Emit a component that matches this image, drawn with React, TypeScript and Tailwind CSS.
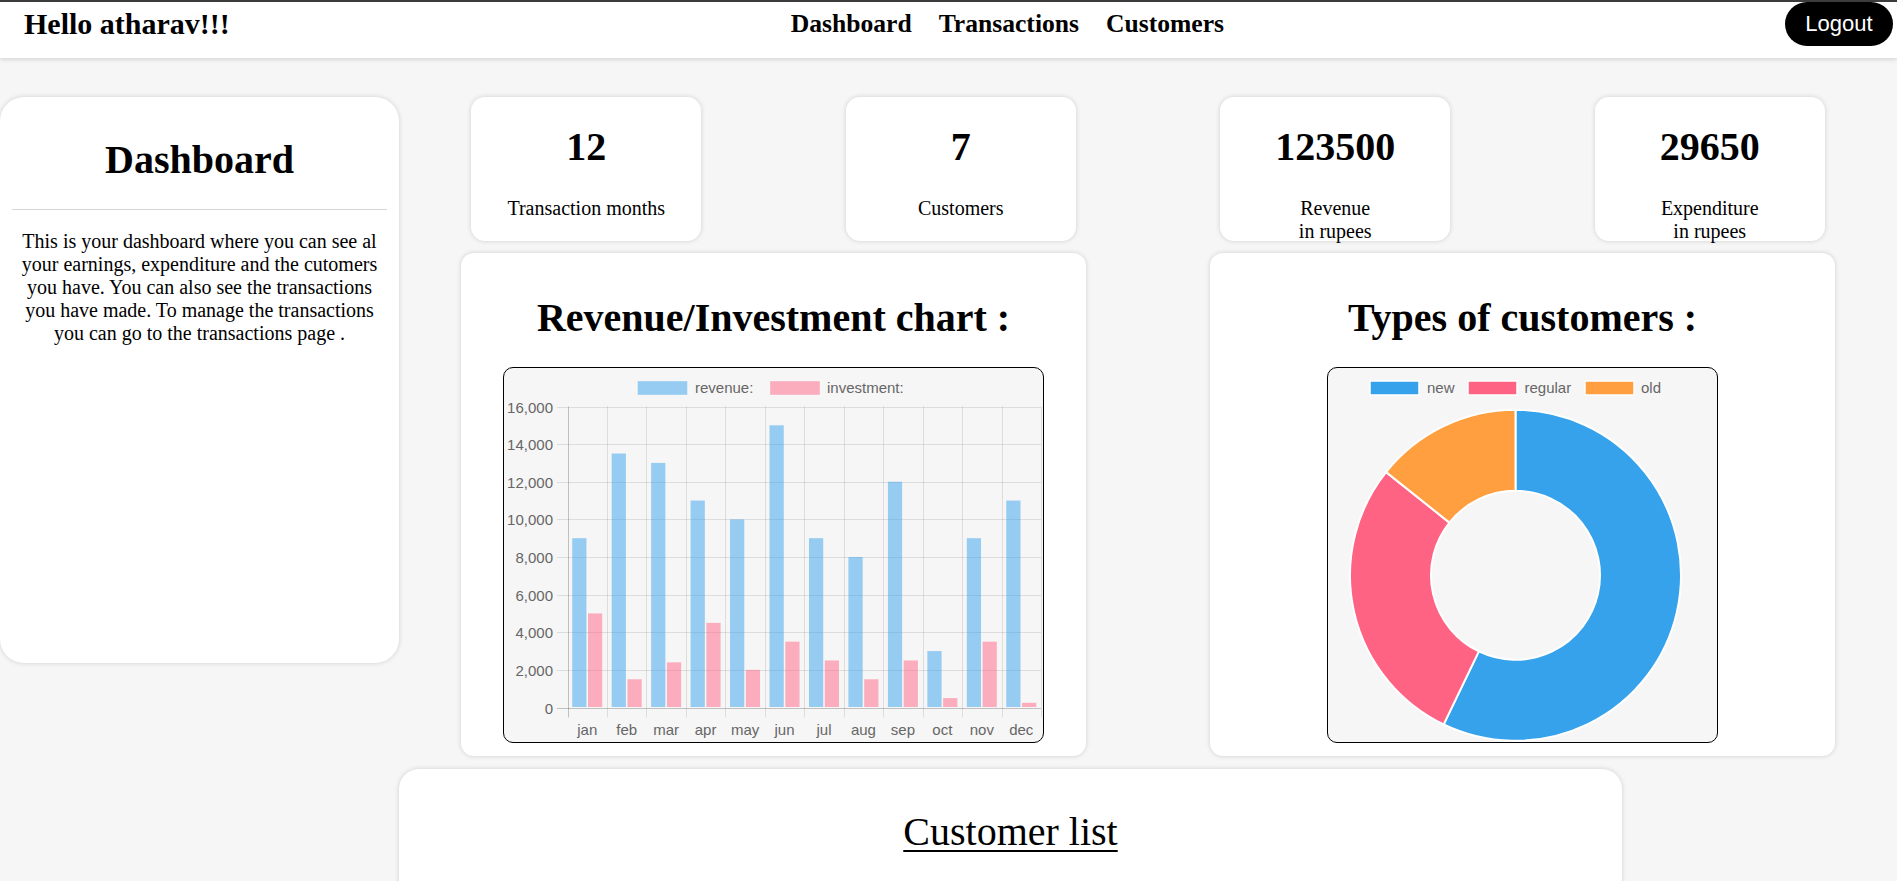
import React from "react";

const revenue = [9000, 13500, 13000, 11000, 10000, 15000, 9000, 8000, 12000, 3000, 9000, 11000];
const investment = [5000, 1500, 2400, 4500, 2000, 3500, 2500, 1500, 2500, 500, 3500, 250];
const months = ["jan", "feb", "mar", "apr", "may", "jun", "jul", "aug", "sep", "oct", "nov", "dec"];

const SANS = "'Liberation Sans', Arial, Helvetica, sans-serif";

function BarChart() {
  const W = 539;
  const H = 374;
  const left = 63.5;
  const right = 537;
  const top = 38.5;
  const zero = 339.5;
  const step = (zero - top) / 8;
  const cat = (right - left) / 12;
  const yFor = (v: number) => zero - (v / 16000) * (zero - top);
  const slot = (cat * 0.8) / 2;
  const bw = slot * 0.9;
  return (
    <svg width={W} height={H} className="block">
      <rect x={133.5} y={13} width={50} height={14} fill="rgba(54,162,235,0.5)" stroke="rgba(255,255,255,0.35)" />
      <text x={191} y={25} fontSize={15} fill="#666" fontFamily={SANS}>
        revenue:
      </text>
      <rect x={266} y={13} width={50} height={14} fill="rgba(255,99,132,0.5)" stroke="rgba(255,255,255,0.35)" />
      <text x={323} y={25} fontSize={15} fill="#666" fontFamily={SANS}>
        investment:
      </text>
      {Array.from({ length: 9 }).map((_, i) => {
        const y = Math.round(top + i * step) + 0.5;
        return (
          <g key={"h" + i}>
            <line x1={53} x2={right} y1={y} y2={y} stroke={i === 8 ? "rgba(0,0,0,0.22)" : "rgba(0,0,0,0.1)"} />
            <text x={49} y={y + 5} fontSize={15} fill="#666" textAnchor="end" fontFamily={SANS}>
              {((8 - i) * 2000).toLocaleString("en-US")}
            </text>
          </g>
        );
      })}
      {Array.from({ length: 13 }).map((_, i) => {
        const x = Math.round(left + i * cat) + 0.5;
        return (
          <line
            key={"v" + i}
            x1={x}
            x2={x}
            y1={top}
            y2={349.5}
            stroke={i === 0 ? "rgba(0,0,0,0.22)" : "rgba(0,0,0,0.1)"}
          />
        );
      })}
      {months.map((m, i) => {
        const cx = left + i * cat;
        const start = cx + cat * 0.1;
        const rx = start + slot * 0.05;
        const ix = start + slot + slot * 0.05;
        const ry = yFor(revenue[i]);
        const iy = yFor(investment[i]);
        return (
          <g key={m}>
            <rect x={rx} y={ry} width={bw} height={zero - 0.5 - ry} fill="rgba(54,162,235,0.5)" />
            <rect x={ix} y={iy} width={bw} height={zero - 0.5 - iy} fill="rgba(255,99,132,0.5)" />
            <text x={cx + cat / 2} y={367} fontSize={15} fill="#666" textAnchor="middle" fontFamily={SANS}>
              {m}
            </text>
          </g>
        );
      })}
    </svg>
  );
}

function Doughnut() {
  const data = [
    { v: 4, c: "#36a2eb", label: "new" },
    { v: 2, c: "#ff6384", label: "regular" },
    { v: 1, c: "#ff9f40", label: "old" },
  ];
  const total = data.reduce((s, d) => s + d.v, 0);
  const cx = 187.5;
  const cy = 207.3;
  const R = 165.5;
  const r = 84.5;
  const pt = (a: number, rad: number) => {
    const t = (a * Math.PI) / 180;
    return [cx + rad * Math.sin(t), cy - rad * Math.cos(t)];
  };
  let acc = 0;
  const paths = data.map((d) => {
    const a0 = acc;
    const a1 = acc + (d.v / total) * 360;
    acc = a1;
    const large = a1 - a0 > 180 ? 1 : 0;
    const [ox0, oy0] = pt(a0, R);
    const [ox1, oy1] = pt(a1, R);
    const [ix1, iy1] = pt(a1, r);
    const [ix0, iy0] = pt(a0, r);
    const dstr = `M ${ox0} ${oy0} A ${R} ${R} 0 ${large} 1 ${ox1} ${oy1} L ${ix1} ${iy1} A ${r} ${r} 0 ${large} 0 ${ix0} ${iy0} Z`;
    return { d: dstr, c: d.c };
  });
  const legend = [
    { x: 42, tx: 99, c: "#36a2eb", t: "new" },
    { x: 140, tx: 196.5, c: "#ff6384", t: "regular" },
    { x: 257, tx: 313, c: "#ff9f40", t: "old" },
  ];
  return (
    <svg width={389} height={374} className="block">
      {legend.map((l) => (
        <g key={l.t}>
          <rect x={l.x} y={13} width={49} height={14} fill={l.c} stroke="#fff" strokeWidth={1.5} />
          <text x={l.tx} y={25} fontSize={15} fill="#666" fontFamily={SANS}>
            {l.t}
          </text>
        </g>
      ))}
      {paths.map((p, i) => (
        <path key={i} d={p.d} fill={p.c} stroke="#fff" strokeWidth={2} strokeLinejoin="round" />
      ))}
    </svg>
  );
}

function StatCard({ value, label }: { value: string; label: React.ReactNode }) {
  return (
    <div className="flex h-[144px] w-[230px] flex-col items-center rounded-[14px] bg-white pt-[27px] shadow-[0_0_5px_rgba(0,0,0,0.16)]">
      <div className="text-[40px] font-bold leading-[46px]">{value}</div>
      <div className="mt-[27px] text-center text-[20px] leading-[23px]">{label}</div>
    </div>
  );
}

function ChartCard({ title, children, boxW }: { title: string; children: React.ReactNode; boxW: string }) {
  return (
    <div className="flex h-[503px] w-[625px] flex-col items-center rounded-[13px] bg-white pt-[42px] shadow-[0_0_5px_rgba(0,0,0,0.16)]">
      <h2 className="text-center text-[40px] font-bold leading-[46px]">{title}</h2>
      <div className={"mt-[26px] h-[376px] overflow-hidden rounded-[10px] border border-black bg-[#f6f6f6] " + boxW}>
        {children}
      </div>
    </div>
  );
}

export default function App() {
  return (
    <div className="min-h-screen overflow-hidden bg-[#f6f6f6] font-['Liberation_Serif','Times_New_Roman',serif] text-black">
      <header className="relative z-10 h-[58px] border-t-2 border-[#3c3c3c] bg-white pl-6 pr-1 shadow-[0_2px_4px_rgba(0,0,0,0.12)]">
        <div className="flex h-[44px] items-center justify-between">
          <div className="text-[30px] font-bold leading-[34px]">Hello atharav!!!</div>
          <nav className="flex gap-[27px] text-[25.6px] font-bold leading-[30px]">
            <a>Dashboard</a>
            <a>Transactions</a>
            <a>Customers</a>
          </nav>
          <button className="h-[44px] w-[108px] rounded-full bg-black font-['Liberation_Sans',Arial,sans-serif] text-[22px] leading-[26px] text-white">
            Logout
          </button>
        </div>
      </header>

      <div className="flex pt-[39px]">
        <aside className="w-[399px] shrink-0">
          <div className="flex h-[566px] flex-col rounded-[24px] bg-white pt-[40px] shadow-[0_0_5px_rgba(0,0,0,0.16)]">
            <h1 className="text-center text-[40px] font-bold leading-[46px]">Dashboard</h1>
            <hr className="mx-3 mt-[26px] border-t border-[#d8d3d8]" />
            <p className="mt-5 px-3 text-center text-[20px] leading-[23px]">
              This is your dashboard where you can see al your earnings, expenditure and the cutomers you have. You
              can also see the transactions you have made. To manage the transactions you can go to the transactions
              page .
            </p>
          </div>
        </aside>

        <main className="flex min-w-0 flex-1 flex-col gap-3">
          <div className="grid grid-cols-4 justify-items-center">
            <StatCard value="12" label="Transaction months" />
            <StatCard value="7" label="Customers" />
            <StatCard
              value="123500"
              label={
                <>
                  Revenue
                  <br />
                  in rupees
                </>
              }
            />
            <StatCard
              value="29650"
              label={
                <>
                  Expenditure
                  <br />
                  in rupees
                </>
              }
            />
          </div>

          <div className="grid grid-cols-2 justify-items-center">
            <ChartCard title="Revenue/Investment chart :" boxW="w-[541px]">
              <BarChart />
            </ChartCard>
            <ChartCard title="Types of customers :" boxW="w-[391px]">
              <Doughnut />
            </ChartCard>
          </div>

          <div className="mt-px h-[220px] w-[1223px] rounded-[20px] bg-white pt-[40px] shadow-[0_0_5px_rgba(0,0,0,0.16)]">
            <h2 className="text-center text-[40px] font-normal leading-[46px] underline decoration-2 underline-offset-[5px]">
              Customer list
            </h2>
          </div>
        </main>
      </div>
    </div>
  );
}
